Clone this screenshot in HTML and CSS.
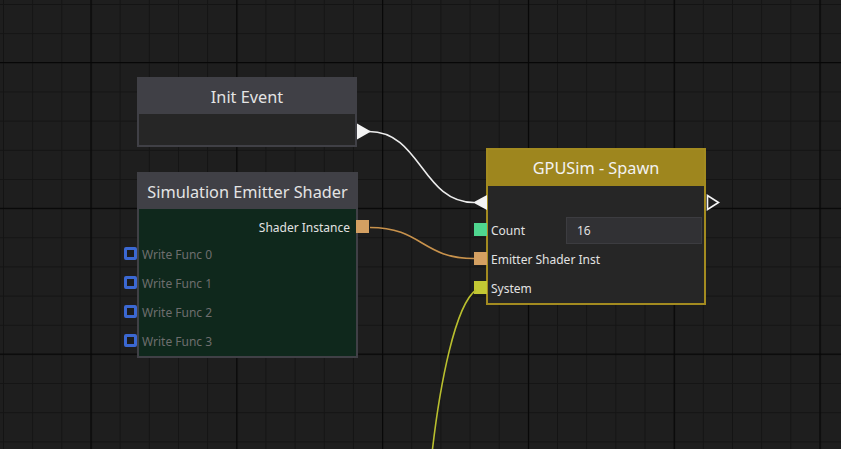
FILE: index.html
```html
<!DOCTYPE html>
<html>
<head>
<meta charset="utf-8">
<link rel="stylesheet" href="styles.css">
</head>
<body>
<div class="canvas">
  <svg class="grid" width="841" height="449" xmlns="http://www.w3.org/2000/svg">
    <defs>
      <pattern id="minor" x="3" y="4" width="29.16" height="29.16" patternUnits="userSpaceOnUse">
        <rect x="0" y="0" width="29.16" height="1" fill="#141414"/>
        <rect x="0" y="0" width="1" height="29.16" fill="#141414"/>
      </pattern>
      <pattern id="major" x="90.5" y="62" width="145.8" height="145.8" patternUnits="userSpaceOnUse">
        <rect x="0" y="0" width="145.8" height="1.2" fill="#070707"/>
        <rect x="0" y="0" width="1.2" height="145.8" fill="#070707"/>
      </pattern>
    </defs>
    <rect width="841" height="449" fill="#1e1e1e"/>
    <rect width="841" height="449" fill="url(#minor)"/>
    <rect width="841" height="449" fill="url(#major)"/>
  </svg>

  <div class="node node-init">
    <div class="node-header">Init Event</div>
    <div class="node-body"></div>
  </div>

  <div class="node node-shader">
    <div class="node-header">Simulation Emitter Shader</div>
    <div class="node-body">
      <div class="row row-out">
        <span class="label">Shader Instance</span>
        <span class="pin pin-out pin-orange"></span>
      </div>
      <div class="row row-in"><span class="pin pin-in pin-blue"></span><span class="label dim">Write Func 0</span></div>
      <div class="row row-in"><span class="pin pin-in pin-blue"></span><span class="label dim">Write Func 1</span></div>
      <div class="row row-in"><span class="pin pin-in pin-blue"></span><span class="label dim">Write Func 2</span></div>
      <div class="row row-in"><span class="pin pin-in pin-blue"></span><span class="label dim">Write Func 3</span></div>
    </div>
  </div>

  <div class="node node-spawn">
    <div class="node-header">GPUSim - Spawn</div>
    <div class="node-body">
      <div class="row row-exec"></div>
      <div class="row row-in"><span class="pin pin-in pin-green"></span><span class="label">Count</span><span class="field">16</span></div>
      <div class="row row-in"><span class="pin pin-in pin-orange"></span><span class="label">Emitter Shader Inst</span></div>
      <div class="row row-in"><span class="pin pin-in pin-yellow"></span><span class="label">System</span></div>
    </div>
  </div>

  <svg class="wires" width="841" height="449" xmlns="http://www.w3.org/2000/svg">
    <path d="M369 131.5 C421 131.5 422 202.5 474 202.5" fill="none" stroke="#ececec" stroke-width="1.6"/>
    <path d="M370 227.5 C422 227.5 422 258.5 474 258.5" fill="none" stroke="#c8924c" stroke-width="1.6"/>
    <path d="M476 290 C455 305 440 385 432.5 449" fill="none" stroke="#b9bf2e" stroke-width="1.6"/>
    <polygon points="357,123.5 357,139.5 371,131.5" fill="#f4f4f4"/>
    <polygon points="487,195 487,210 473,202.5" fill="#f4f4f4"/>
    <polygon points="707.5,195.5 707.5,209.5 718.5,202.5" fill="none" stroke="#f4f4f4" stroke-width="1.6"/>
  </svg>
</div>
</body>
</html>
```

FILE: styles.css
```css
* { box-sizing: border-box; }
html, body { margin: 0; padding: 0; background: #1e1e1e; }
body { font-family: "Noto Sans", "Open Sans", sans-serif; color: #e2e2e2; }

.canvas {
  position: relative;
  width: 841px;
  height: 449px;
  overflow: hidden;
}
.grid, .wires { position: absolute; left: 0; top: 0; }
.wires { z-index: 2; pointer-events: none; }

.node {
  position: absolute;
  display: flex;
  flex-direction: column;
  border: 2px solid #404046;
  background: #262626;
  z-index: 1;
}
.node-header {
  display: flex;
  align-items: center;
  justify-content: center;
  background: #404046;
  font-size: 16.3px;
  color: #e4e4e4;
  flex: none;
}
.node-body { flex: 1; display: flex; flex-direction: column; }

.node-init { left: 137px; top: 77px; width: 220px; height: 70px; }
.node-init .node-header { height: 35px; }

.node-shader { left: 137px; top: 172px; width: 221px; height: 186px; }
.node-shader .node-header { height: 35px; }
.node-shader .node-body { background: #0f281c; padding-top: 5px; }

.node-spawn { left: 486px; top: 148px; width: 220px; height: 157px; border-color: #a38b20; }
.node-spawn .node-header { height: 36px; background: #9e861e; color: #f2f2f2; }

.row {
  position: relative;
  display: flex;
  align-items: center;
  font-size: 12px;
  height: 29px;
}
.row-out { justify-content: flex-end; height: 26px; padding-right: 6px; }
.row-in { padding-left: 3px; }
.row-exec { height: 30px; }

.label { white-space: nowrap; }
.dim { color: #6e6e6e; }

.pin { position: absolute; width: 13px; height: 13px; }
.pin-out { right: -13px; top: 6px; }
.pin-in { left: -14px; top: 7px; }
.pin-orange { background: #d4a062; }
.pin-green { background: #4fd68f; }
.pin-yellow { background: #c3c834; }
.pin-blue { border: 3px solid #3b68d2; border-radius: 2px; background: #1c1c1c; }
.node-shader .pin-in { left: -15px; top: 7px; }

.field {
  margin-left: auto;
  margin-right: 2px;
  width: 136px;
  height: 27px;
  background: #313134;
  border: 1px solid #3c3c40;
  display: flex;
  align-items: center;
  padding-left: 10px;
  color: #e0e0e0;
}
```
